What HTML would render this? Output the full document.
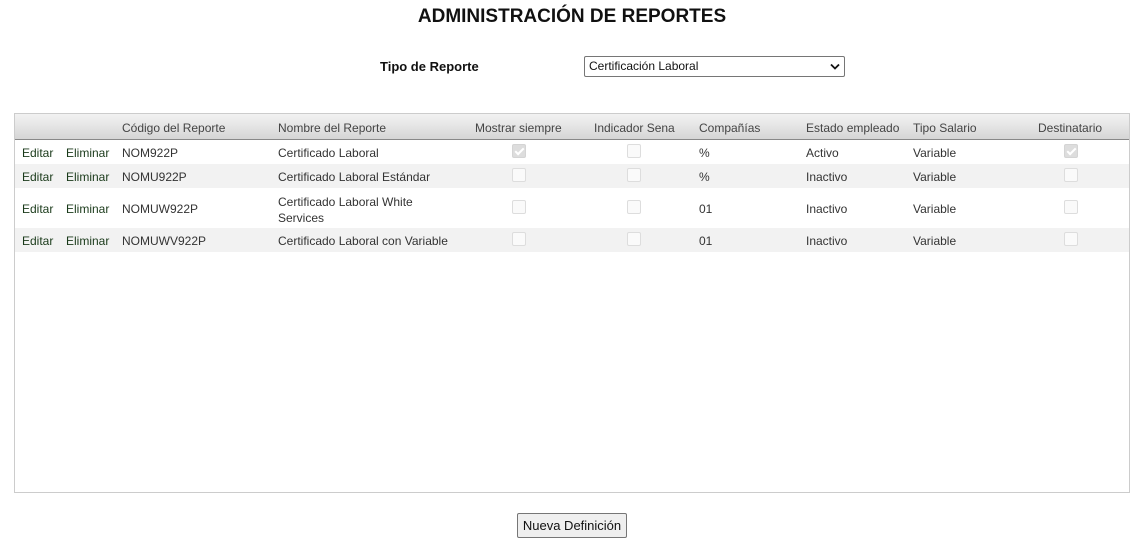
<!DOCTYPE html>
<html><head><meta charset="utf-8"><style>
body{margin:0;width:1148px;height:546px;background:#fff;font-family:"Liberation Sans",sans-serif;color:#222;position:relative;overflow:hidden}
.a{position:absolute;white-space:nowrap}
.t{font-size:12px;line-height:14px;color:#333}
.h{font-size:12px;line-height:14px;color:#444}
.cb{position:absolute;width:12px;height:12px;border:1px solid #ddd;border-radius:2px;background:#fafafa;box-sizing:content-box}
.cb.on{background:#ddd;border-color:#d4d4d4}
.cb.on:after{content:"";position:absolute;left:4px;top:1px;width:3px;height:7px;border:solid #fff;border-width:0 2px 2px 0;transform:rotate(45deg)}
.g{color:#1a3a1a}
</style></head><body>
<div class="a" style="left:0;width:1144px;top:6px;text-align:center;font-size:19px;font-weight:bold;color:#111;line-height:22px">ADMINISTRACIÓN DE REPORTES</div>
<div class="a" style="left:380px;top:59px;font-size:13px;font-weight:bold;color:#111;line-height:16px">Tipo de Reporte</div>
<div class="a" style="left:584px;top:56px;width:259px;height:19px;border:1px solid #767676;border-radius:2px;font-size:12px;line-height:19px;color:#111"><span style="margin-left:4px">Certificación Laboral</span>
<svg style="position:absolute;right:4px;top:6px" width="10" height="7" viewBox="0 0 10 7"><path d="M1 1.5 L5 5.5 L9 1.5" fill="none" stroke="#111" stroke-width="1.8"/></svg></div>

<div class="a" style="left:14px;top:113px;width:1114px;height:378px;border:1px solid #ccc"></div>
<div class="a" style="left:15px;top:114px;width:1114px;height:25px;background:linear-gradient(#f2f2f2,#e9e9e9 35%,#d5d5d5);border-bottom:1px solid #888"></div>
<div class="a" style="left:15px;top:164px;width:1114px;height:24px;background:#f2f2f2"></div>
<div class="a" style="left:15px;top:228px;width:1114px;height:24px;background:#f2f2f2"></div>

<div class="a h" style="left:122px;top:121px">Código del Reporte</div>
<div class="a h" style="left:278px;top:121px">Nombre del Reporte</div>
<div class="a h" style="left:475px;top:121px">Mostrar siempre</div>
<div class="a h" style="left:594px;top:121px">Indicador Sena</div>
<div class="a h" style="left:699px;top:121px">Compañías</div>
<div class="a h" style="left:806px;top:121px">Estado empleado</div>
<div class="a h" style="left:913px;top:121px">Tipo Salario</div>
<div class="a h" style="left:1038px;top:121px">Destinatario</div>

<!-- row1 -->
<div class="a t g" style="left:22px;top:146px">Editar</div><div class="a t g" style="left:66px;top:146px">Eliminar</div>
<div class="a t" style="left:122px;top:146px">NOM922P</div><div class="a t" style="left:278px;top:146px">Certificado Laboral</div>
<div class="cb on" style="left:512px;top:144px"></div><div class="cb" style="left:627px;top:144px"></div>
<div class="a t" style="left:699px;top:146px">%</div><div class="a t" style="left:806px;top:146px">Activo</div><div class="a t" style="left:913px;top:146px">Variable</div>
<div class="cb on" style="left:1064px;top:144px"></div>
<!-- row2 -->
<div class="a t g" style="left:22px;top:170px">Editar</div><div class="a t g" style="left:66px;top:170px">Eliminar</div>
<div class="a t" style="left:122px;top:170px">NOMU922P</div><div class="a t" style="left:278px;top:170px">Certificado Laboral Estándar</div>
<div class="cb" style="left:512px;top:168px"></div><div class="cb" style="left:627px;top:168px"></div>
<div class="a t" style="left:699px;top:170px">%</div><div class="a t" style="left:806px;top:170px">Inactivo</div><div class="a t" style="left:913px;top:170px">Variable</div>
<div class="cb" style="left:1064px;top:168px"></div>
<!-- row3 -->
<div class="a t g" style="left:22px;top:202px">Editar</div><div class="a t g" style="left:66px;top:202px">Eliminar</div>
<div class="a t" style="left:122px;top:202px">NOMUW922P</div><div class="a t" style="left:278px;top:194px;line-height:16px">Certificado Laboral White<br>Services</div>
<div class="cb" style="left:512px;top:200px"></div><div class="cb" style="left:627px;top:200px"></div>
<div class="a t" style="left:699px;top:202px">01</div><div class="a t" style="left:806px;top:202px">Inactivo</div><div class="a t" style="left:913px;top:202px">Variable</div>
<div class="cb" style="left:1064px;top:200px"></div>
<!-- row4 -->
<div class="a t g" style="left:22px;top:234px">Editar</div><div class="a t g" style="left:66px;top:234px">Eliminar</div>
<div class="a t" style="left:122px;top:234px">NOMUWV922P</div><div class="a t" style="left:278px;top:234px">Certificado Laboral con Variable</div>
<div class="cb" style="left:512px;top:232px"></div><div class="cb" style="left:627px;top:232px"></div>
<div class="a t" style="left:699px;top:234px">01</div><div class="a t" style="left:806px;top:234px">Inactivo</div><div class="a t" style="left:913px;top:234px">Variable</div>
<div class="cb" style="left:1064px;top:232px"></div>

<div class="a" style="left:517px;top:513px;width:108px;height:23px;border:1px solid #767676;border-radius:2px;background:#efefef;font-size:13px;line-height:23px;text-align:center;color:#111">Nueva Definición</div>
</body></html>
